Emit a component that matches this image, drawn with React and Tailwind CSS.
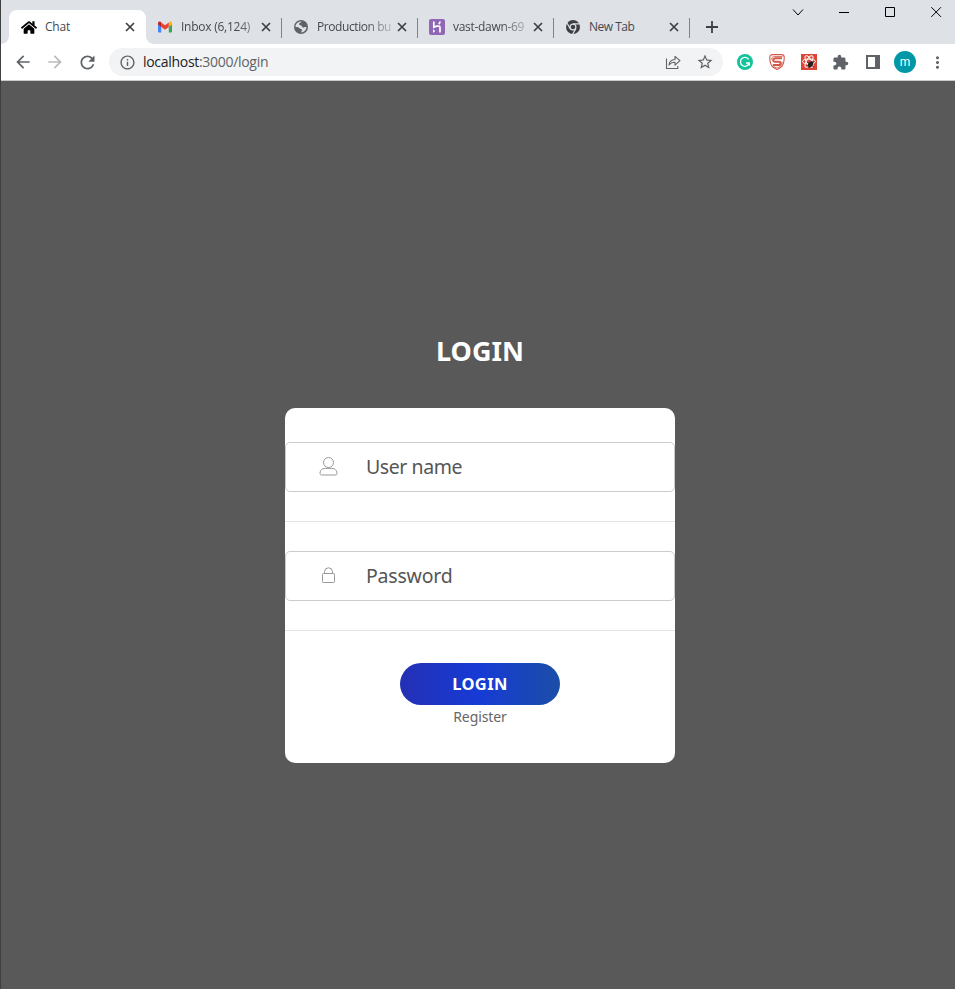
import React from "react";
import { FaHome } from "react-icons/fa";
import { MdArrowBack, MdArrowForward, MdRefresh, MdInfoOutline, MdStarBorder, MdExtension, MdMoreVert } from "react-icons/md";

const UI = "font-['Open_Sans','Noto_Sans',sans-serif]";
const PAGE = "font-['Noto_Sans','Open_Sans',sans-serif]";

function CloseIcon() {
  return (
    <svg width="10" height="10" viewBox="0 0 10 10" className="shrink-0 text-[#3c4043]">
      <path d="M1 1l8 8M9 1l-8 8" stroke="currentColor" strokeWidth="1.7" />
    </svg>
  );
}

function Gmail() {
  return (
    <svg width="16" height="16" viewBox="0 0 16 16">
      <path d="M1 4.5v8.2c0 .5.4.8.8.8h2.4V7z" fill="#4285f4" />
      <path d="M15 4.5v8.2c0 .5-.4.8-.8.8h-2.4V7z" fill="#34a853" />
      <path d="M11.8 4v4L15 5.5V4.2c0-1.5-1.7-2.2-2.7-1.4z" fill="#fbbc04" />
      <path d="M4.2 8V3.4L8 6.3l3.8-2.9V8L8 10.8z" fill="#ea4335" />
      <path d="M1 4.2v1.3L4.2 8V3.4l-.6-.6C2.600 2 1 2.700 1 4.200z" fill="#c5221f" />
    </svg>
  );
}

function Globe() {
  return (
    <svg width="16" height="16" viewBox="0 0 16 16">
      <circle cx="8" cy="8" r="7" fill="#5f6368" />
      <path d="M8.500 2.600c-.2 1.400-2.500 1-2.500 2.500 0 1.300 1.700 1 2.500 1.600.8.700.3 1.600 1.600 1.700 1 .1 1.500-.6 3.400-.4a5.500 5.500 0 0 1-5.300 5.500c-.3-1 1-1.600.8-2.700-.2-1-1.700-.8-2.500-1.500C5.700 8.500 5 8 2.500 8c0-3 2.600-5.600 6-5.400z" fill="#dee1e6" />
      <path d="M9 2.800l3 1.500-.5 2-2-.5z" fill="#5f6368" />
    </svg>
  );
}

function Heroku() {
  return (
    <svg width="16" height="16" viewBox="0 0 16 16">
      <rect width="16" height="16" rx="2" fill="#9067b5" />
      <path d="M4.800 2.500v5.700c2-.9 6.200-2 6.200.3v5M11 2.500c0 1.200-.5 2-1.200 2.700" fill="none" stroke="#fff" strokeWidth="1.700" />
      <path d="M4 10.200l2.200 1.900L4 14z" fill="#fff" />
    </svg>
  );
}

function Chrome() {
  return (
    <svg width="16" height="16" viewBox="0 0 16 16">
      <circle cx="8" cy="8" r="7" fill="#3c4043" />
      <circle cx="8" cy="8" r="2.900" fill="none" stroke="#dee1e6" strokeWidth="1.200" />
      <path d="M8 4.800h6.500M5.200 9.600L2 4M10.800 9.600L7.600 15.200" stroke="#dee1e6" strokeWidth="1.200" />
    </svg>
  );
}

const fade = " [mask-image:linear-gradient(to_right,black_65%,rgba(0,0,0,0.25))]";

const tabs = [
  { title: "Chat", icon: <FaHome size={17} color="#000" />, track: "tracking-[-0.2px]" },
  { title: "Inbox (6,124)", icon: <Gmail />, track: "tracking-[-0.25px]" + " [mask-image:linear-gradient(to_right,black_75%,rgba(0,0,0,0.5))]" },
  { title: "Production bu", icon: <Globe />, track: "tracking-[-0.42px]" + fade },
  { title: "vast-dawn-69", icon: <Heroku />, track: "tracking-[-0.3px]" + fade },
  { title: "New Tab", icon: <Chrome />, track: "tracking-[-0.5px]" },
];

function Tab({ title, icon, track, index }) {
  const active = index === 0;
  return (
    <div className={"relative flex h-[34px] w-[136px] shrink-0 items-center " + (active ? "z-10" : "")}>
      {active && (
        <svg width="152" height="34" viewBox="0 0 152 34" className="absolute -left-2 top-0">
          <path d="M0 34a8 8 0 0 0 8-8V8a8 8 0 0 1 8-8h121a8 8 0 0 1 8 8v18a8 8 0 0 0 7 8z" fill="#fff" />
        </svg>
      )}
      {index > 1 && <span className="absolute left-0 top-2 h-5 w-px bg-[#808387]" />}
      <span className="relative ml-3 flex h-4 w-4 shrink-0 items-center justify-center">{icon}</span>
      <span className={"relative ml-2 w-[74px] shrink-0 whitespace-nowrap text-[12px] leading-4 text-[#45494d] " + track}>{title}</span>
      <span className="relative ml-[6px] flex shrink-0"><CloseIcon /></span>
    </div>
  );
}

function Cell({ children }) {
  return <div className="flex h-8 w-8 shrink-0 items-center justify-center text-[#5f6368]">{children}</div>;
}

function TitleBar() {
  return (
    <div className="flex h-[44px] bg-[#dee1e6] pl-[8px]">
      <div className="flex items-end">
        {tabs.map((t, i) => <Tab key={t.title} {...t} index={i} />)}
        <div className="relative flex h-[34px] w-[46px] items-center justify-center">
          <span className="absolute left-0 top-2 h-5 w-px bg-[#808387]" />
          <svg width="12" height="12" viewBox="0 0 12 12"><path d="M6 0v12M0 6h12" stroke="#3c4043" strokeWidth="1.800" /></svg>
        </div>
      </div>
      <div className="ml-auto flex h-6 items-center pr-[13px] text-black">
        <svg width="150" height="12" viewBox="0 0 150 12" fill="none" stroke="currentColor">
          <path d="M1 3.500l5 5.500 5-5.500" strokeWidth="1" />
          <path d="M47 6.500h10" />
          <path d="M93.500 1.500h9v9h-9z" />
          <path d="M139.300 1.200l9.700 9.700M149 1.200l-9.700 9.700" />
        </svg>
      </div>
    </div>
  );
}

function Toolbar() {
  return (
    <div className="flex h-[37px] items-center border-b border-[#c9cccb] bg-white pl-[6px]">
      <Cell><MdArrowBack size={20} /></Cell>
      <Cell><MdArrowForward size={20} className="text-[#bababa]" /></Cell>
      <Cell><MdRefresh size={21} /></Cell>
      <div className="ml-[6px] flex h-7 w-[614px] items-center rounded-full bg-[#f1f3f4] px-[2px]">
        <Cell><MdInfoOutline size={17} /></Cell>
        <span className="text-[14px] leading-5 tracking-[-0.3px] text-[#5f6368]"><span className="text-[#202124]">localhost</span>:3000/login</span>
        <div className="ml-auto flex">
          <Cell>
            <svg width="16" height="16" viewBox="0 0 16 16" fill="none" stroke="currentColor" strokeWidth="1.100">
              <path d="M1.500 4.500v10h11.300V12" />
              <path d="M4 11c.3-3.500 2.500-5.300 6-5.500V2.300l5 4.400-5 4.400V8.300c-2.700 0-4.500.8-6 2.700z" strokeLinejoin="round" />
            </svg>
          </Cell>
          <Cell><MdStarBorder size={18} /></Cell>
        </div>
      </div>
      <div className="ml-[6px] flex">
        <Cell>
          <svg width="16" height="16" viewBox="0 0 16 16">
            <circle cx="8" cy="8" r="8" fill="#15c39a" />
            <path d="M11.700 5.300A4.500 4.500 0 1 0 12.300 9H9M12.300 8.400v3" fill="none" stroke="#fff" strokeWidth="1.300" />
          </svg>
        </Cell>
        <Cell>
          <svg width="16" height="16" viewBox="0 0 16 16">
            <path d="M3.500.6h9c1.600 0 2.700 1 2.700 2.500 0 3.500-.3 6.500-1.900 8.700C12 13.500 10 14.600 8 15.500c-2-.9-4-2-5.300-3.700C1.100 9.600.8 6.600.8 3.100.8 1.600 1.900.6 3.500.6z" fill="#fff" stroke="#d25746" strokeWidth="1.100" />
            <path d="M13 4.300H6.500C3.500 4.300 3.500 7.700 6 7.700h4c2.300 0 2.200 3.300-.3 3.300H3.800" fill="none" stroke="#d25746" strokeWidth="2" strokeLinejoin="round" />
            <path d="M13.500 2.500H5.500C3.500 2.500 2.400 3.700 2.500 5.500M4.500 12.500L8 14.200l3.200-1.700c1.500-1 2-3 2-4.700" fill="none" stroke="#d25746" strokeWidth=".8" />
          </svg>
        </Cell>
        <Cell>
          <svg width="16" height="16" viewBox="0 0 16 16">
            <rect width="16" height="16" fill="#db4437" />
            <g fill="none" stroke="#fff" strokeWidth="1">
              <ellipse cx="8" cy="7.500" rx="6.500" ry="2.500" />
              <ellipse cx="8" cy="7.500" rx="6.500" ry="2.500" transform="rotate(60 8 7.500)" />
              <ellipse cx="8" cy="7.500" rx="6.500" ry="2.500" transform="rotate(120 8 7.500)" />
            </g>
            <ellipse cx="9.500" cy="10.300" rx="2.200" ry="3.300" fill="#222" transform="rotate(35 9.500 10.300)" />
            <path d="M6 8l7 5M6.500 12l6-4M8 14l3-7" stroke="#222" strokeWidth=".8" />
          </svg>
        </Cell>
        <Cell><MdExtension size={17} className="-translate-x-px" /></Cell>
        <Cell>
          <svg width="14" height="14" viewBox="0 0 14 14"><path fillRule="evenodd" d="M0 0h14v14H0zM2 2v10h7V2z" fill="currentColor" /></svg>
        </Cell>
        <Cell><span className="flex h-[22px] w-[22px] items-center justify-center rounded-full bg-[#0097a7] pb-px font-[Roboto,sans-serif] text-[12px] leading-none text-white">m</span></Cell>
        <Cell><MdMoreVert size={19} /></Cell>
      </div>
    </div>
  );
}

function Field({ label, icon, track }) {
  return (
    <div className="border-b border-[#e4e4e4] pb-[29px]">
      <div className="flex h-[50px] items-center rounded-[5px] border border-[#cccccc] bg-white">
        <span className="ml-[32px] flex w-[21px] justify-center pb-[2px]">{icon}</span>
        <span className={"ml-[27px] text-[19.5px] leading-6 text-[#555555] " + track}>{label}</span>
      </div>
    </div>
  );
}

export default function App() {
  return (
    <div className={"flex h-[989px] w-[955px] flex-col overflow-hidden border-l border-[#3f3f42] bg-[#595959] " + UI}>
      <TitleBar />
      <Toolbar />
      <main className={"flex flex-1 flex-col items-center pl-[4px] " + PAGE}>
        <h1 className="mt-[252px] text-[27px] font-bold leading-[36px] text-white">LOGIN</h1>
        <form className="mt-[39px] h-[355px] w-[390px] rounded-[10px] bg-white pt-[34px]">
          <Field
            label="User name"
            track="tracking-[-0.42px]"
            icon={
              <svg width="19" height="19" viewBox="0 0 19 19" fill="none" stroke="#999" strokeWidth="1">
                <circle cx="9.500" cy="5.500" r="5" />
                <path d="M1 16.500c0-2.300 1-3.800 2.700-4.600.9-.4 1.700-.5 2.700-.5h6.200c1 0 1.800.1 2.700.5 1.700.8 2.700 2.300 2.700 4.600 0 .7-.5 1.500-1.500 1.500h-14c-1 0-1.500-.8-1.500-1.500z" />
              </svg>
            }
          />
          <div className="h-[29px]" />
          <Field
            label="Password"
            track="tracking-[-0.2px]"
            icon={
              <svg width="13" height="16" viewBox="0 0 13 16" fill="none" stroke="#999" strokeWidth="1">
                <rect x=".5" y="6.500" width="12" height="9" rx=".8" />
                <path d="M2.500 6.500V4.800a4 4 0 0 1 8 0v1.700" />
              </svg>
            }
          />
          <div className="flex flex-col items-center pt-[32px]">
            <button type="button" className="h-[42px] w-[160px] rounded-full bg-[linear-gradient(to_right,#2430b4,#163bd5_50%,#1b4ea6)] pt-px text-[16.5px] font-bold leading-none tracking-[0.4px] text-white">LOGIN</button>
            <a className="mt-[2px] text-[14px] leading-5 tracking-[-0.1px] text-[#666666]">Register</a>
          </div>
        </form>
      </main>
    </div>
  );
}
